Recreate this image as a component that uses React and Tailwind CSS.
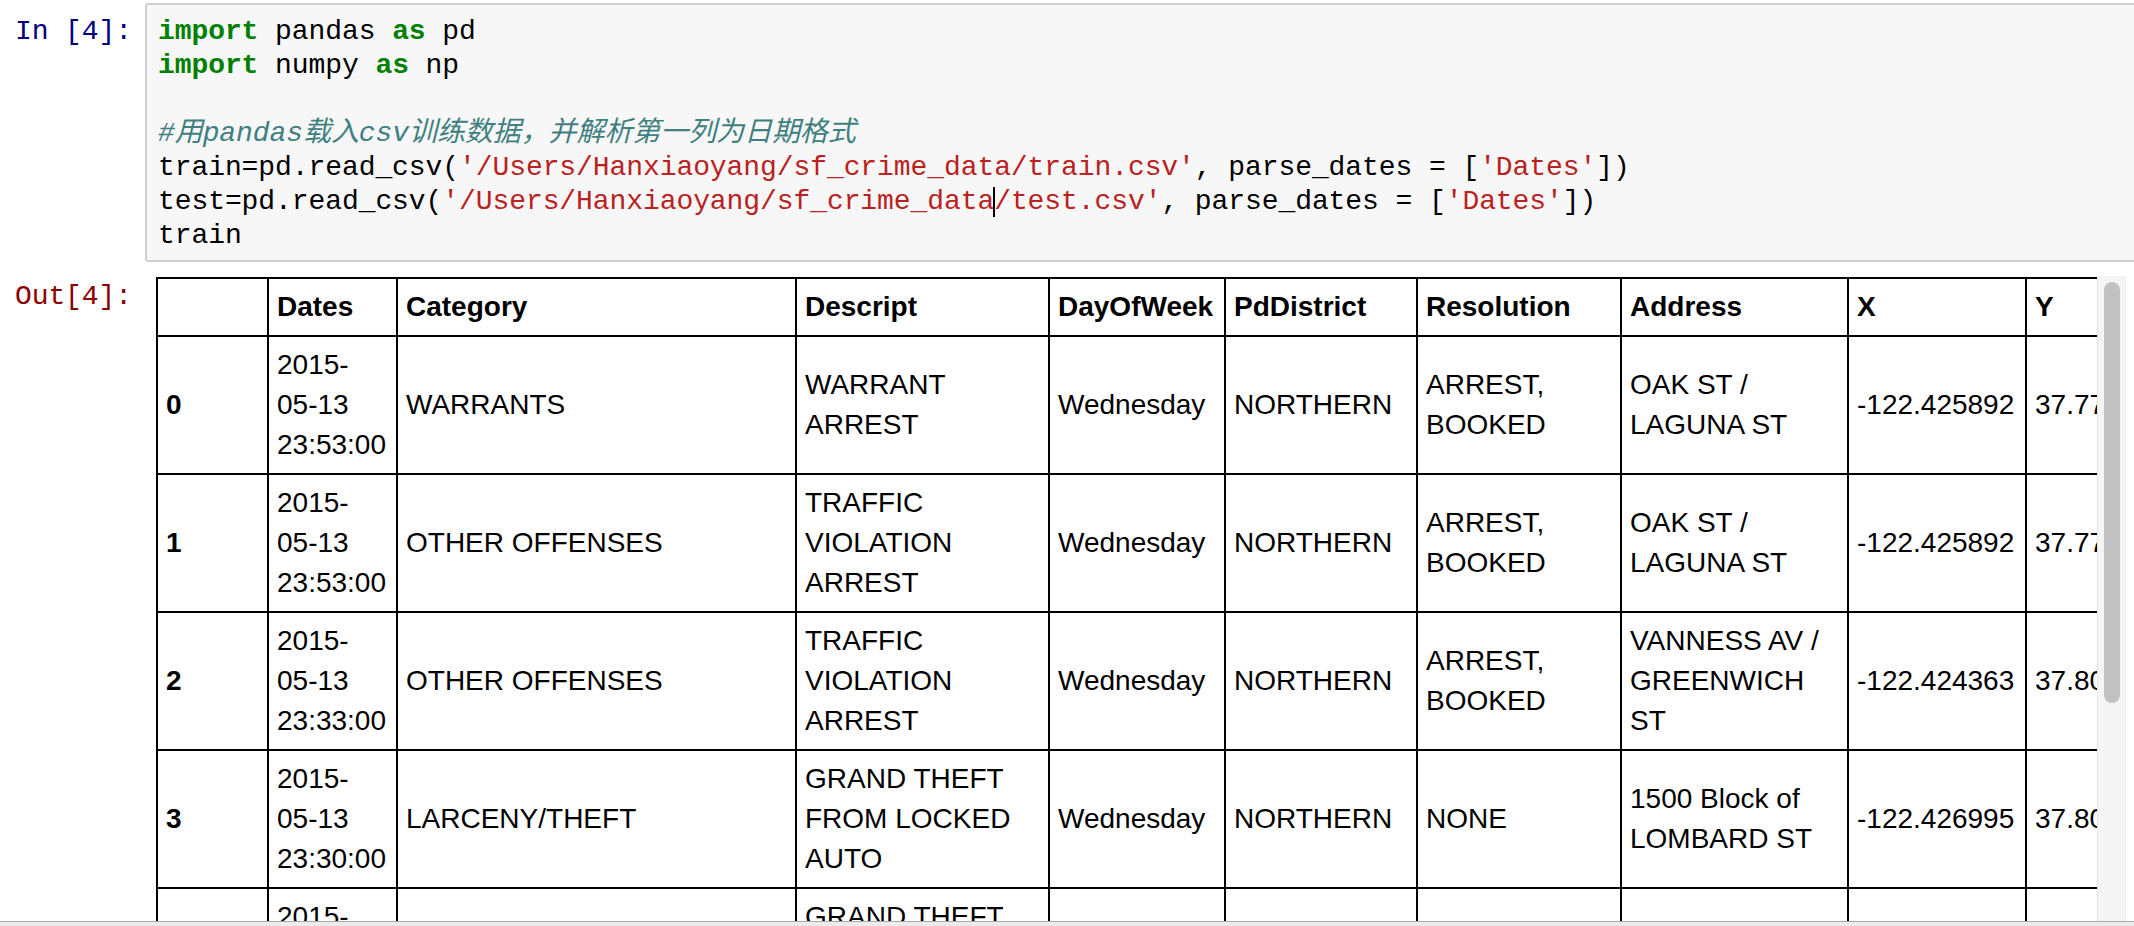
const MONO = "font-['Liberation_Mono','Noto_Sans_CJK_SC',monospace]";

const COLS = [
  { label: "", w: "w-[111px]" },
  { label: "Dates", w: "w-[129px]" },
  { label: "Category", w: "w-[399px]" },
  { label: "Descript", w: "w-[253px]" },
  { label: "DayOfWeek", w: "w-[176px]" },
  { label: "PdDistrict", w: "w-[192px]" },
  { label: "Resolution", w: "w-[204px]" },
  { label: "Address", w: "w-[227px]" },
  { label: "X", w: "w-[178px]" },
  { label: "Y", w: "w-[150px]" },
];

const ROWS = [
  [
    "0",
    ["2015-", "05-13", "23:53:00"],
    ["WARRANTS"],
    ["WARRANT", "ARREST"],
    ["Wednesday"],
    ["NORTHERN"],
    ["ARREST,", "BOOKED"],
    ["OAK ST /", "LAGUNA ST"],
    ["-122.425892"],
    ["37.774599"],
  ],
  [
    "1",
    ["2015-", "05-13", "23:53:00"],
    ["OTHER OFFENSES"],
    ["TRAFFIC", "VIOLATION", "ARREST"],
    ["Wednesday"],
    ["NORTHERN"],
    ["ARREST,", "BOOKED"],
    ["OAK ST /", "LAGUNA ST"],
    ["-122.425892"],
    ["37.774599"],
  ],
  [
    "2",
    ["2015-", "05-13", "23:33:00"],
    ["OTHER OFFENSES"],
    ["TRAFFIC", "VIOLATION", "ARREST"],
    ["Wednesday"],
    ["NORTHERN"],
    ["ARREST,", "BOOKED"],
    ["VANNESS AV /", "GREENWICH", "ST"],
    ["-122.424363"],
    ["37.800414"],
  ],
  [
    "3",
    ["2015-", "05-13", "23:30:00"],
    ["LARCENY/THEFT"],
    ["GRAND THEFT", "FROM LOCKED", "AUTO"],
    ["Wednesday"],
    ["NORTHERN"],
    ["NONE"],
    ["1500 Block of", "LOMBARD ST"],
    ["-122.426995"],
    ["37.800873"],
  ],
  [
    "4",
    ["2015-", "05-13", "23:30:00"],
    ["LARCENY/THEFT"],
    ["GRAND THEFT", "FROM LOCKED", "AUTO"],
    ["Wednesday"],
    ["PARK"],
    ["NONE"],
    ["100 Block of", "BRODERICK ST"],
    ["-122.438738"],
    ["37.771541"],
  ],
];

const Kw = ({ children }) => <span className="font-bold text-[#008000]">{children}</span>;
const Str = ({ children }) => <span className="text-[#ba2121]">{children}</span>;

function Lines({ lines }) {
  return lines.map((line, i) => (
    <span key={i} className="block whitespace-nowrap">
      {line}
    </span>
  ));
}

export default function App() {
  return (
    <div className="h-[926px] w-[2134px] flex flex-col overflow-hidden bg-white">
      {/* input cell */}
      <div className="flex pt-[3px] shrink-0">
        <div
          className={`${MONO} w-[145px] shrink-0 pr-[13px] pt-[12px] text-right text-[28px] leading-[34px] tracking-[-0.08px] text-[#000080]`}
        >
          In&nbsp;[4]:
        </div>
        <div
          className={`${MONO} flex-1 min-w-0 rounded-l-[3px] border-2 border-r-0 border-[#cfcfcf] bg-[#f7f7f7] pl-[11px] pt-[10px] pb-[7px] text-[28px] leading-[34px] tracking-[-0.08px] text-black whitespace-pre`}
        >
          <div>
            <Kw>import</Kw> pandas <Kw>as</Kw> pd
          </div>
          <div>
            <Kw>import</Kw> numpy <Kw>as</Kw> np
          </div>
          <div>&nbsp;</div>
          <div className="italic text-[#408080]">#用pandas载入csv训练数据，并解析第一列为日期格式</div>
          <div>
            train=pd.read_csv(<Str>'/Users/Hanxiaoyang/sf_crime_data/train.csv'</Str>, parse_dates = [<Str>'Dates'</Str>])
          </div>
          <div>
            test=pd.read_csv(<Str>'/Users/Hanxiaoyang/sf_crime_data</Str>
            <span className="inline-block w-[2px] h-[30px] -mx-[1px] bg-black align-middle" />
            <Str>/test.csv'</Str>, parse_dates = [<Str>'Dates'</Str>])
          </div>
          <div>train</div>
        </div>
      </div>

      {/* output cell */}
      <div className="flex flex-1 min-h-0">
        <div
          className={`${MONO} w-[145px] shrink-0 pr-[13px] pt-[18px] text-right text-[28px] leading-[34px] tracking-[-0.08px] text-[#8b0000]`}
        >
          Out[4]:
        </div>
        <div className="flex-1 min-w-0 overflow-hidden pl-[11px] pt-[15px]">
          <table className="w-[2019px] max-w-none table-fixed border-collapse font-['Liberation_Sans',Arial,sans-serif] text-[28px] leading-[40px] text-black">
            <thead>
              <tr>
                {COLS.map((c, i) => (
                  <th
                    key={i}
                    className={`${c.w} border-2 border-black px-2 py-2 text-left align-middle font-bold whitespace-nowrap`}
                  >
                    {c.label}
                  </th>
                ))}
              </tr>
            </thead>
            <tbody>
              {ROWS.map((row, r) => (
                <tr key={r}>
                  <th className="border-2 border-black px-2 py-2 text-left align-middle font-bold">{row[0]}</th>
                  {row.slice(1).map((cell, i) => (
                    <td key={i} className="border-2 border-black px-2 py-2 text-left align-middle font-normal">
                      <Lines lines={cell} />
                    </td>
                  ))}
                </tr>
              ))}
            </tbody>
          </table>
        </div>
        <div className="mt-[14px] w-[29px] shrink-0 border-x border-l-[#e4e4e4] border-r-[#eeeeee] bg-[#f5f5f5]">
          <div className="ml-[6px] mt-[6px] h-[421px] w-[16px] rounded-full bg-[#c1c1c1]" />
        </div>
        <div className="w-[8px] shrink-0" />
      </div>

      <div className="h-[5px] shrink-0 border-t border-[#a9a9a9] bg-[#ececec]" />
    </div>
  );
}
